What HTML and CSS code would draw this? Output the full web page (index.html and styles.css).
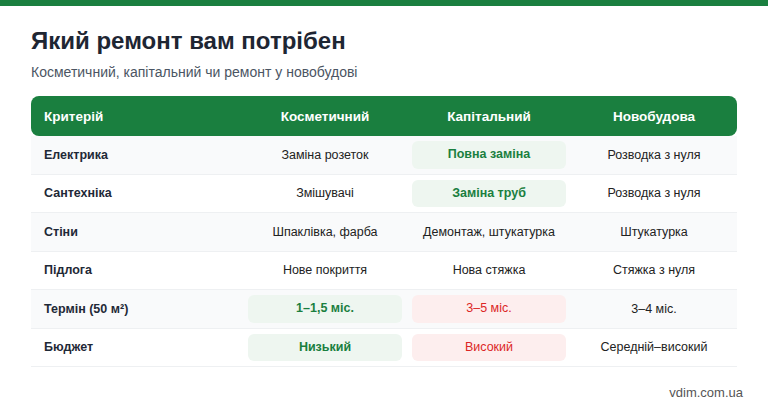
FILE: index.html
```html
<!DOCTYPE html>
<html lang="uk">
<head>
  <meta charset="UTF-8" />
  <title>Який ремонт вам потрібен</title>
  <link rel="stylesheet" href="styles.css">
</head>
<body>
  <div class="top-bar"></div>
  <div class="page">
    <h1>Який ремонт вам потрібен</h1>
    <p class="subtitle">Косметичний, капітальний чи ремонт у новобудові</p>

    <table class="compare">
      <thead>
        <tr>
          <th class="crit">Критерій</th>
          <th>Косметичний</th>
          <th>Капітальний</th>
          <th>Новобудова</th>
        </tr>
      </thead>
      <tbody>
        <tr>
          <td class="crit">Електрика</td>
          <td>Заміна розеток</td>
          <td><span class="good">Повна заміна</span></td>
          <td>Розводка з нуля</td>
        </tr>
        <tr>
          <td class="crit">Сантехніка</td>
          <td>Змішувачі</td>
          <td><span class="good">Заміна труб</span></td>
          <td>Розводка з нуля</td>
        </tr>
        <tr>
          <td class="crit">Стіни</td>
          <td>Шпаклівка, фарба</td>
          <td>Демонтаж, штукатурка</td>
          <td>Штукатурка</td>
        </tr>
        <tr>
          <td class="crit">Підлога</td>
          <td>Нове покриття</td>
          <td>Нова стяжка</td>
          <td>Стяжка з нуля</td>
        </tr>
        <tr>
          <td class="crit">Термін (50 м²)</td>
          <td><span class="good">1–1,5 міс.</span></td>
          <td><span class="bad">3–5 міс.</span></td>
          <td>3–4 міс.</td>
        </tr>
        <tr>
          <td class="crit">Бюджет</td>
          <td><span class="good">Низький</span></td>
          <td><span class="bad">Високий</span></td>
          <td>Середній–високий</td>
        </tr>
      </tbody>
    </table>

    <div class="footer">vdim.com.ua</div>
  </div>
</body>
</html>
```

FILE: styles.css
```css
body {
  margin: 0;
  font-family: 'Liberation Sans', Arial, sans-serif;
  background: #fff;
  color: #1f2937;
}

.top-bar {
  height: 6px;
  background: #1a7f3f;
}

.page {
  padding: 20px 31px 0 31px;
}

h1 {
  margin: 0;
  font-size: 24px;
  font-weight: 700;
  color: #1e2633;
  line-height: 30px;
}

.subtitle {
  margin: 7px 0 0 0;
  font-size: 14px;
  color: #4b5563;
  line-height: 18px;
}

.compare {
  margin-top: 15px;
  width: 706px;
  border-collapse: separate;
  border-spacing: 0;
  font-size: 12.5px;
}

.compare th {
  background: #1a7f3f;
  color: #fff;
  font-weight: 700;
  font-size: 13.5px;
  height: 40px;
  padding: 0 5px;
  text-align: center;
}

.compare th:first-child {
  border-radius: 8px 0 0 8px;
}
.compare th:last-child {
  border-radius: 0 8px 8px 0;
}

.compare th.crit,
.compare td.crit {
  text-align: left;
  padding-left: 13px;
  width: 194px;
}

.compare th:nth-child(2),
.compare th:nth-child(3),
.compare td:nth-child(2),
.compare td:nth-child(3) {
  width: 154px;
}

.compare td {
  height: 27.5px;
  padding: 5px;
  text-align: center;
  color: #222;
  border-bottom: 1px solid #eef0f2;
}

.compare td.crit {
  font-weight: 700;
  color: #1f2937;
}

.compare tbody tr:nth-child(odd) td {
  background: #f9fafb;
}

.good,
.bad {
  display: block;
  height: 27.5px;
  line-height: 27.5px;
  border-radius: 6px;
}

.good {
  background: #eef6f0;
  color: #1a7f3f;
  font-weight: 700;
}

.bad {
  background: #fdeeee;
  color: #dc2626;
}

.footer {
  text-align: right;
  margin-top: 18px;
  margin-right: -6px;
  font-size: 13px;
  color: #555;
}
```
